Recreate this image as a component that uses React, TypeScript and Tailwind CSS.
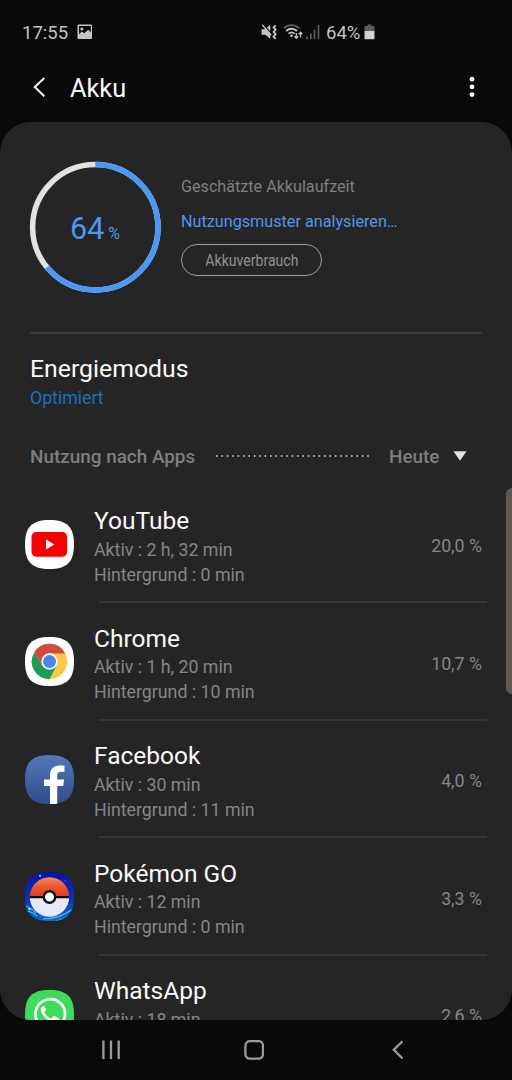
import React from 'react';

const SQUIRCLE = 'M24.5 0C42 0 49 7 49 24.5S42 49 24.5 49 0 42 0 24.5 7 0 24.5 0Z';

function YouTubeIcon() {
  return (
    <svg className="w-[49px] h-[49px]" viewBox="0 0 49 49">
      <path d={SQUIRCLE} fill="#fff" />
      <rect x="6.5" y="12.1" width="35.6" height="24.6" rx="4.6" fill="#f80000" />
      <path d="M21 19.3v10.3l8.3-5.15Z" fill="#fff" />
    </svg>
  );
}

function ChromeIcon() {
  return (
    <svg className="w-[49px] h-[49px]" viewBox="0 0 49 49">
      <path d={SQUIRCLE} fill="#fff" />
      <circle cx="24.5" cy="24.5" r="17.7" fill="#fdc944" />
      <path d="M9.17 15.65A17.7 17.7 0 0 1 39.9 15.9L40.2 16.45H24.5L17.5 28.6Z" fill="#d04a3e" />
      <path d="M9.17 15.65A17.7 17.7 0 0 0 24.5 42.2L31.6 28.6L24.5 32.7L17.4 28.6Z" fill="#1a9d5a" />
      <circle cx="24.5" cy="24.5" r="8.2" fill="#f4f4f4" />
      <circle cx="24.5" cy="24.5" r="6.5" fill="#4a86ee" />
    </svg>
  );
}

function FacebookIcon() {
  return (
    <svg className="w-[49px] h-[49px]" viewBox="0 0 49 49">
      <defs>
        <linearGradient id="fb-bg" x1="0" y1="0" x2="0" y2="1">
          <stop offset="0" stopColor="#5578bb" />
          <stop offset="1" stopColor="#304c8b" />
        </linearGradient>
      </defs>
      <path d={SQUIRCLE} fill="url(#fb-bg)" />
      <path d="M25 49V31h-6v-6.5h6v-4.2c0-6.3 3.6-9.8 9.3-9.8 2.1 0 3.8.1 5.2.3v6h-3.6c-2.9 0-3.7 1.3-3.7 3.6v4.1h6.9L38.2 31h-6v17.7c-2 .2-4.5.3-7.2.3Z" fill="#fff" />
    </svg>
  );
}

function PokemonIcon() {
  return (
    <svg className="w-[49px] h-[49px]" viewBox="0 0 49 49">
      <defs>
        <linearGradient id="pk-bg" x1="0" y1="0" x2="0" y2="1">
          <stop offset="0" stopColor="#0a12a0" />
          <stop offset="0.55" stopColor="#0b33c0" />
          <stop offset="1" stopColor="#126bd0" />
        </linearGradient>
        <linearGradient id="pk-red" x1="0" y1="0" x2="0" y2="1">
          <stop offset="0" stopColor="#f58a60" />
          <stop offset="0.45" stopColor="#ee5836" />
          <stop offset="1" stopColor="#d93a20" />
        </linearGradient>
        <clipPath id="pk-clip">
          <path d={SQUIRCLE} />
        </clipPath>
      </defs>
      <g clipPath="url(#pk-clip)">
        <rect width="49" height="49" fill="url(#pk-bg)" />
        <path d="M0 34c5 1 8 4 11 7M0 39c5 0 9 2 12 5M18 47c10 0 19-2 28-9M30 49c7-1 12-3 17-7" stroke="#41c5ee" strokeWidth="1.2" fill="none" />
        <circle cx="15" cy="3.8" r="1" fill="#b8dcff" />
        <circle cx="4.5" cy="37" r="1.3" fill="#9be6fa" />
        <circle cx="40" cy="9" r="0.6" fill="#7aa6ff" />
        <path d="M4.8 25a19.7 19.7 0 0 1 39.4 0Z" fill="url(#pk-red)" />
        <path d="M4.8 25a19.7 19.7 0 0 0 39.4 0Z" fill="#e8e9f8" />
        <path d="M4.6 25.1h39.8" stroke="#0b0b12" strokeWidth="2.2" />
        <circle cx="24.5" cy="25" r="5.7" fill="#fff" stroke="#0b0b12" strokeWidth="2.4" />
      </g>
    </svg>
  );
}

function WhatsAppIcon() {
  return (
    <svg className="w-[49px] h-[49px]" viewBox="0 0 49 49">
      <path d={SQUIRCLE} fill="#3ddc5b" />
      <path d="M10.5 39l2.1-7.3A14.8 14.8 0 1 1 18 36.9Z" fill="none" stroke="#fff" strokeWidth="2.7" />
      <path d="M19.7 16.7c-.4-.8-.8-.8-1.3-.8-1 0-2.6 1.2-2.6 4 0 2.6 2 5.2 4 7.4 2.9 3.2 6.8 5.4 9.7 5.4 2.6 0 4.5-1.9 4.5-4 0-.5-.2-.7-.7-.9l-3.8-1.9c-.6-.2-.9-.1-1.3.4l-1.5 1.9c-.3.4-.7.4-1.2.2-2.6-1.2-4.7-3.1-6-5.6-.2-.5-.2-.8.1-1.1l1.2-1.5c.3-.4.3-.7.1-1.2Z" fill="#fff" />
    </svg>
  );
}

const apps = [
  { name: 'YouTube', active: '2 h, 32 min', background: '0 min', usage: '20,0 %', Icon: YouTubeIcon },
  { name: 'Chrome', active: '1 h, 20 min', background: '10 min', usage: '10,7 %', Icon: ChromeIcon },
  { name: 'Facebook', active: '30 min', background: '11 min', usage: '4,0 %', Icon: FacebookIcon },
  { name: 'Pokémon GO', active: '12 min', background: '0 min', usage: '3,3 %', Icon: PokemonIcon },
  { name: 'WhatsApp', active: '18 min', background: '', usage: '2,6 %', Icon: WhatsAppIcon },
];

function StatusBar() {
  return (
    <div className="flex items-center h-[65px] shrink-0 pl-[22px] text-[18.5px] leading-6 text-[#c4c4c4]">
      <span className="w-[46px]">17:55</span>
      {/* Screenshot notification */}
      <svg className="w-4 h-4 ml-[9px] -mt-0.5" viewBox="0 0 16 16">
        <path fillRule="evenodd" d="M1.5 0.5h12.5a1 1 0 0 1 1 1v12.5a1 1 0 0 1-1 1h-12.5a1 1 0 0 1-1-1v-12.5a1 1 0 0 1 1-1ZM2 2v8l3-2.5 2.2 1.8 4-3.5 2.6 2.4V2Z" fill="#c4c4c4" />
        <circle cx="4.9" cy="4.9" r="1.5" fill="#c4c4c4" />
      </svg>
      {/* Muted, vibrate */}
      <svg className="w-4 h-4 ml-[168px] -mt-0.5" viewBox="0 0 16 16">
        <path d="M0.5 5.3h3.8L9.3 0.8v14L4.3 10.7H0.5Z" fill="#c4c4c4" />
        <path d="M2 0.2l8.5 9.6" stroke="#090909" strokeWidth="1.3" />
        <path d="M1.2 0.8l9 10.4" stroke="#c4c4c4" strokeWidth="1.4" />
        <path d="M14.6 1l-2 2 2 2.3-2 2.3 2 2.3-2 2.3 2 2.3" transform="translate(0 .3)" stroke="#c4c4c4" strokeWidth="1.9" fill="none" />
      </svg>
      {/* Wifi */}
      <svg className="w-5 h-4 ml-1.5 -mt-0.5" viewBox="0 0 20 16">
        <g fill="none" strokeWidth="1.8">
          <path d="M0.8 4.3C5 0 12 0 16.3 4.3" stroke="#5e5e5e" />
          <path d="M3.2 7C6.4 4 11 4 14 7" stroke="#c4c4c4" />
          <path d="M5.6 9.7C7.5 8 9.7 8 11.6 9.7" stroke="#c4c4c4" />
        </g>
        <circle cx="8.5" cy="11.8" r="1.3" fill="#c4c4c4" />
        <path d="M13.3 9v5M11.5 12.3l1.8 2 1.8-2M17.5 13.5v-5M15.7 10.2l1.8-2 1.8 2" fill="none" stroke="#c4c4c4" strokeWidth="1.3" />
      </svg>
      {/* Signal */}
      <svg className="w-[14px] h-4 ml-[3px] -mt-0.5" viewBox="0 0 14 16">
        <path d="M1 12.5v2.7M4.8 9.5v5.7M8.5 5.5v9.7M12.5 1v14.2" stroke="#606060" strokeWidth="1.6" />
      </svg>
      <span className="ml-[6px] w-[35px] whitespace-nowrap">64%</span>
      <svg className="w-[11px] h-4 ml-[3px] -mt-0.5" viewBox="0 0 11 16">
        <path d="M3.5 0.5h4v1.6h2.2a.8.8 0 0 1 .8.8V7H.5V2.9a.8.8 0 0 1 .8-.8h2.2Z" fill="#5e5e5e" />
        <path d="M.5 7h10v7.5a.8.8 0 0 1-.8.8H1.3a.8.8 0 0 1-.8-.8Z" fill="#d0d0d0" />
      </svg>
    </div>
  );
}

function NavBar() {
  return (
    <div className="flex items-center h-[60px] shrink-0 pl-[102px]">
      <svg className="w-[18px] h-5" viewBox="0 0 18 20">
        <path d="M1.4 0.6v18.4M9 0.6v18.4M16.7 0.6v18.4" stroke="#9b9b9b" strokeWidth="2.3" />
      </svg>
      <svg className="w-5 h-5 ml-[124px]" viewBox="0 0 20 20">
        <rect x="1.4" y="1.1" width="17.6" height="17.6" rx="4.6" fill="none" stroke="#9b9b9b" strokeWidth="2.3" />
      </svg>
      <svg className="w-3 h-5 ml-[128px]" viewBox="0 0 12 20">
        <path d="M10.5 1.3L1.8 9.8l8.7 8.7" fill="none" stroke="#9b9b9b" strokeWidth="2.3" />
      </svg>
    </div>
  );
}

export default function App() {
  return (
    <div className="relative flex flex-col w-[512px] h-[1080px] overflow-hidden bg-[#090909] font-['Roboto',sans-serif]">
      <StatusBar />

      {/* App bar */}
      <header className="flex items-center h-[46px] mb-[11px] shrink-0 pl-[33px] pr-[37px]">
        <svg className="w-3 h-5 -mt-0.5" viewBox="0 0 12 20">
          <path d="M11.3 1L1.8 10l9.5 9.2" fill="none" stroke="#fafafa" strokeWidth="2" />
        </svg>
        <h1 className="ml-[25px] mt-0.5 text-[25.3px] leading-8 text-[#fafafa]">Akku</h1>
        <svg className="w-[6px] h-[22px] ml-auto -mt-0.5" viewBox="0 0 6 22">
          <circle cx="3" cy="3.2" r="2.4" fill="#fff" />
          <circle cx="3" cy="10.9" r="2.4" fill="#fff" />
          <circle cx="3" cy="18.6" r="2.4" fill="#fff" />
        </svg>
      </header>

      <main className="flex flex-col h-[898px] shrink-0 overflow-hidden bg-[#252525] rounded-[31px] pt-[39px]">
        {/* Battery level */}
        <section className="flex gap-5 pl-[29px] h-[132px] shrink-0">
          <div className="relative w-[132px] h-[132px]">
            <svg className="w-[132px] h-[132px]" viewBox="0 0 132 132">
              <g fill="none" strokeWidth="5.5" transform="rotate(-90 66.3 66.3)">
                <circle cx="66.3" cy="66.3" r="62.7" stroke="#e2e2e2" />
                <circle cx="66.3" cy="66.3" r="62.7" stroke="#4b97f6" pathLength="100" strokeDasharray="64 36" />
              </g>
            </svg>
            <div className="absolute inset-0 flex items-baseline pl-[41px] pt-[47px] text-[#4b97f6]">
              <span className="text-[30.5px] leading-[42px]">64</span>
              <span className="ml-1 text-base leading-[42px]">%</span>
            </div>
          </div>
          <div className="flex flex-col items-start pt-[14px]">
            <p className="text-[16.15px] leading-6 text-[#808080]">Geschätzte Akkulaufzeit</p>
            <p className="mt-[11px] text-[16.2px] leading-6 text-[#4f96ee]">Nutzungsmuster analysieren…</p>
            <button className="flex items-center justify-center w-[141px] h-8 mt-2.5 pt-0.5 border border-[#a0a0a0] rounded-full text-base text-[#929292]">
              <span className="scale-x-[0.88]">Akkuverbrauch</span>
            </button>
          </div>
        </section>

        <div className="h-0.5 mt-[39px] ml-[30px] mr-[30px] shrink-0 bg-[#3a3a3a]" />

        {/* Power mode */}
        <section className="pl-[30px] mt-[19px]">
          <h2 className="text-[24.8px] leading-8 text-[#fafafa]">Energiemodus</h2>
          <p className="mt-px text-[17.7px] leading-6 text-[#1b6fbd]">Optimiert</p>
        </section>

        {/* Usage header */}
        <div className="flex items-center h-6 mt-[35px] shrink-0 pl-[30px] text-[18.9px] leading-6 font-medium text-[#7e7e7e]">
          <span className="w-[185px] whitespace-nowrap">Nutzung nach Apps</span>
          <svg className="w-[154px] h-0.5 -mt-0.5" viewBox="0 0 154 2">
            <path d="M1 1h153" stroke="#d8d8d8" strokeWidth="1.6" strokeDasharray="1.6 3.8" />
          </svg>
          <span className="ml-5 w-[64px]">Heute</span>
          <svg className="w-[14px] h-[10px] -mt-[3px]" viewBox="0 0 14 10">
            <path d="M0.5 0.3h13L7 9.7Z" fill="#e2e2e2" />
          </svg>
        </div>

        <ul className="mt-[16.5px]">
          {apps.map(({ name, active, background, usage, Icon }) => (
            <li key={name} className="relative flex h-[117.5px] pl-[25px] pr-[30px]">
              <div className="pt-[34px]">
                <Icon />
              </div>
              <div className="ml-[20px] pt-[19.5px]">
                <h3 className="text-[24.5px] leading-8 text-[#fafafa]">{name}</h3>
                <p className="mt-[0.9px] text-[17.75px] leading-[24.7px] text-[#868686]">Aktiv : {active}</p>
                {background && (
                  <p className="text-[17.75px] leading-[24.7px] text-[#868686]">Hintergrund : {background}</p>
                )}
              </div>
              <span className="ml-auto pt-[48.5px] text-[17.75px] leading-6 text-[#868686]">{usage}</span>
              <div className="absolute bottom-0 left-[99px] right-[25px] h-0.5 bg-[#363636]" />
            </li>
          ))}
        </ul>
      </main>

      <NavBar />

      {/* Edge panel handle */}
      <div className="absolute top-[488px] right-0 w-[6px] h-[206px] rounded-l-md bg-[#5f5754]" />
    </div>
  );
}
